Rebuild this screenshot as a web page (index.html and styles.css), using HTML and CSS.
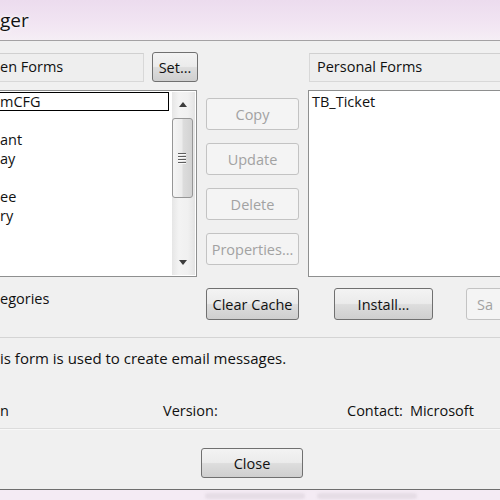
FILE: index.html
```html
<!DOCTYPE html>
<html>
<head>
<meta charset="utf-8">
<link rel="stylesheet" href="styles.css">
</head>
<body>
<div class="titlebar"><span class="title">ger</span></div>
<div class="dialog">
  <div class="grid">
    <div class="row1-left">
      <div class="label label-left">en Forms</div>
      <button class="btn set">Set...</button>
    </div>
    <div></div>
    <div class="label label-right">Personal Forms</div>

    <div class="listbox list-left">
      <ul class="items">
        <li class="focused"><span>mCFG</span></li>
        <li></li>
        <li>ant</li>
        <li>ay</li>
        <li></li>
        <li>ee</li>
        <li>ry</li>
      </ul>
      <div class="scrollbar">
        <div class="arrow up"></div>
        <div class="thumb"><div class="grip"><i></i><i></i><i></i><i></i></div></div>
        <div class="track"></div>
        <div class="arrow down"></div>
      </div>
    </div>
    <div class="mid-buttons">
      <button class="btn disabled">Copy</button>
      <button class="btn disabled">Update</button>
      <button class="btn disabled">Delete</button>
      <button class="btn disabled">Properties...</button>
    </div>
    <div class="listbox list-right">
      <ul class="items"><li>TB_Ticket</li></ul>
    </div>

    <div class="categories">egories</div>
    <div class="row3-mid"><button class="btn wide">Clear Cache</button></div>
    <div class="row3-right">
      <button class="btn install">Install...</button>
      <button class="btn disabled save">Sa</button>
    </div>
  </div>
  <div class="sep"></div>
  <p class="desc">is form is used to create email messages.</p>
  <div class="info">
    <span class="cut">n</span>
    <span>Version:</span>
    <span class="contact"><span>Contact:</span><span>Microsoft</span></span>
  </div>
  <div class="sep sep2"></div>
  <div class="footer"><button class="btn close">Close</button></div>
</div>
<div class="frame-bottom"><span class="glow g1"></span><span class="glow g2"></span></div>
</body>
</html>
```
FILE: styles.css
```css
html, body {
  margin: 0;
  padding: 0;
}
body {
  width: 500px;
  height: 500px;
  overflow: hidden;
  font-family: "Open Sans", "Noto Sans", sans-serif;
  font-size: 14.5px;
  color: #111;
  background: #f3e9f3;
}
.titlebar {
  height: 40px;
  border-bottom: 1px solid #a4a2a4;
  background: linear-gradient(to bottom, #ecdcee 0%, #f1e4f2 55%, #f5eef5 100%);
  overflow: hidden;
}
.title {
  display: block;
  padding-top: 7px;
  font-size: 19px;
  line-height: 26px;
  color: #111;
  text-shadow: 0 0 6px #fff, 0 0 3px #fff;
}
.dialog {
  height: 448px;
  box-sizing: border-box;
  background: #f0f0f0;
  padding-top: 12px;
}
.grid {
  display: grid;
  grid-template-columns: 197px 93px 200px;
  grid-template-rows: 29px 187px 35px;
  column-gap: 9px;
  row-gap: 8px;
}
.row1-left {
  display: flex;
  width: 200px;
}
.label {
  box-sizing: border-box;
  height: 29px;
  border: 1px solid #d8d8d8;
  border-top-color: #d0d0d0;
  background: #eeeeee;
  line-height: 26px;
  flex-shrink: 0;
}
.label-left {
  width: 144px;
  border-left: none;
}
.label-right {
  margin-left: 1px;
  padding-left: 7px;
}
.btn {
  box-sizing: border-box;
  font-family: inherit;
  font-size: 14.5px;
  color: #111;
  border: 1px solid #707070;
  border-radius: 3px;
  background: linear-gradient(to bottom, #f3f3f3 0%, #ebebeb 48%, #dddddd 52%, #cfcfcf 100%);
  padding: 0;
  margin: 0;
  flex-shrink: 0;
  text-align: center;
}
.btn.disabled {
  color: #a2a2a2;
  border-color: #c3c3c3;
  background: #f4f4f4;
}
.set {
  width: 46px;
  height: 30px;
  margin-left: 8px;
  margin-top: -1px;
}
.listbox {
  box-sizing: border-box;
  height: 187px;
  background: #fff;
  border: 1px solid #8e8f8f;
  display: flex;
}
.list-left {
  border-left: none;
  padding: 1px 1px 1px 0;
}
.list-right {
  width: 200px;
}
.items {
  list-style: none;
  margin: 0;
  padding: 0;
  flex: 1;
}
.items li {
  height: 19px;
  line-height: 19px;
}
.list-left .items li {
  margin-right: 3px;
}
.list-left .focused {
  box-sizing: border-box;
  border: 1px solid #000;
  border-left: none;
  line-height: 17px;
}
.list-right .items {
  padding: 1px 0 0 3px;
}
.scrollbar {
  width: 23px;
  display: flex;
  flex-direction: column;
  background: linear-gradient(to right, #e6e6e6, #f3f3f3 30%, #f0f0f0 70%, #e4e4e4);
}
.arrow {
  height: 26px;
  position: relative;
  flex-shrink: 0;
}
.arrow::after {
  content: "";
  position: absolute;
  left: 7px;
  width: 0;
  height: 0;
  border-left: 4px solid transparent;
  border-right: 4px solid transparent;
}
.arrow.up::after {
  top: 10px;
  border-bottom: 5px solid #3c3c3c;
}
.arrow.down::after {
  top: 11px;
  border-top: 5px solid #3c3c3c;
}
.thumb {
  box-sizing: border-box;
  height: 80px;
  margin-right: 2px;
  border: 1px solid #969696;
  border-radius: 3px;
  background: linear-gradient(to right, #f5f5f5 0%, #ececec 45%, #dcdcdc 55%, #d2d2d2 100%);
  display: flex;
  align-items: center;
  justify-content: center;
  flex-shrink: 0;
}
.grip {
  display: flex;
  flex-direction: column;
  gap: 2px;
  margin-right: 1px;
}
.grip i {
  display: block;
  width: 8px;
  height: 1px;
  background: #5e5e5e;
  box-shadow: 0 1px 0 #fafafa;
}
.track {
  flex: 1;
}
.mid-buttons {
  display: flex;
  flex-direction: column;
  gap: 13px;
  padding-top: 8px;
}
.mid-buttons .btn, .wide {
  width: 93px;
  height: 32px;
}
.categories {
  margin-top: 3px;
  line-height: 18px;
  padding-top: 2px;
}
.row3-mid, .row3-right {
  margin-top: 3px;
}
.row3-right {
  display: flex;
  gap: 33px;
  padding-left: 26px;
}
.install, .save {
  width: 99px;
  height: 32px;
}
.save {
  text-align: left;
  padding-left: 10px;
}
.sep {
  height: 1px;
  background: #d4d4d4;
  margin-top: 17px;
}
.desc {
  margin: 11px 0 0 0;
  line-height: 19px;
  font-size: 15px;
}
.info {
  display: grid;
  grid-template-columns: 163px 184px auto;
  margin-top: 33px;
  line-height: 19px;
}
.contact {
  display: flex;
  gap: 7px;
}
.sep2 {
  margin-top: 8px;
  background: #dcdcdc;
  box-shadow: 0 1px 0 #f8f8f8;
}
.footer {
  padding-top: 19px;
  padding-left: 201px;
}
.close {
  width: 102px;
  height: 30px;
}
.frame-bottom {
  height: 11px;
  border-top: 1px solid #6e6e6e;
  background: #f4ebf4;
  display: flex;
}
.glow {
  display: block;
  height: 6px;
  margin-top: 3px;
  background: #e6dde6;
  border-radius: 3px;
  filter: blur(1px);
}
.g1 { width: 100px; margin-left: 205px; }
.g2 { width: 100px; margin-left: 12px; }
```
